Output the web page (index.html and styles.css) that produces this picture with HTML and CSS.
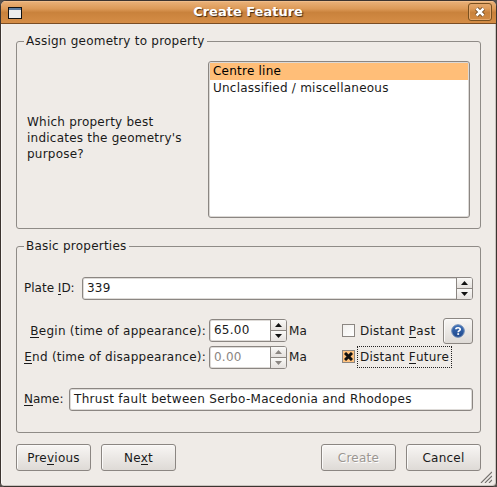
FILE: index.html
```html
<!DOCTYPE html>
<html lang="en">
<head>
<meta charset="utf-8">
<title>Create Feature</title>
<link rel="stylesheet" href="styles.css">
</head>
<body>
<main class="window">
  <header class="titlebar">
    <svg class="app-icon" width="14" height="12" viewBox="0 0 14 12" shape-rendering="crispEdges"><rect width="14" height="12" fill="#111"/><rect x="1" y="1" width="12" height="2" fill="#5b7ba0"/><rect x="1" y="3" width="12" height="8" fill="#ececec"/></svg>
    <h1 class="title">Create Feature</h1>
    <button class="close" aria-label="Close"><svg width="10" height="10" viewBox="0 0 10 10"><path d="M1.5 1.5l7 7M8.5 1.5l-7 7" stroke="#68421c" stroke-width="4.2"/><path d="M1.5 1.5l7 7M8.5 1.5l-7 7" stroke="#fff" stroke-width="2.5"/></svg></button>
  </header>
  <section class="content">
    <section class="group geometry">
      <h2 class="legend">Assign geometry to property</h2>
      <p class="question">Which property best<br>indicates the geometry's<br>purpose?</p>
      <ul class="list">
        <li class="selected">Centre line</li>
        <li>Unclassified / miscellaneous</li>
      </ul>
    </section>
    <section class="group basics">
      <h2 class="legend">Basic properties</h2>
      <div class="row plate">
        <label class="plate-label">Plate <u>I</u>D:</label>
        <div class="field spin"><span class="value">339</span><span class="steps"><i><svg width="7" height="4"><path d="M0 4L3.5 0L7 4z"/></svg></i><i><svg width="7" height="4"><path d="M0 0L3.5 4L7 0z"/></svg></i></span></div>
      </div>
      <div class="row begin">
        <label class="time-label"><u>B</u>egin (time of appearance):</label>
        <div class="field spin time"><span class="value">65.00</span><span class="steps"><i><svg width="7" height="4"><path d="M0 4L3.5 0L7 4z"/></svg></i><i><svg width="7" height="4"><path d="M0 0L3.5 4L7 0z"/></svg></i></span></div>
        <span class="unit">Ma</span>
        <span class="check"></span>
        <label class="check-label past">Distant <u>P</u>ast</label>
        <button class="help" aria-label="Help"><svg width="14" height="14" viewBox="0 0 14 14"><defs><linearGradient id="blue" x2="0" y2="1"><stop stop-color="#3f71b8"/><stop offset="1" stop-color="#1e478c"/></linearGradient></defs><circle cx="7" cy="7" r="6.3" fill="url(#blue)" stroke="#6f8db8"/><path d="M4.9 5.3C5 3.2 9.2 3.2 9.2 5.4C9.2 6.7 7.2 6.7 7.2 8.3" fill="none" stroke="#fff" stroke-width="1.7"/><rect x="6.3" y="9.2" width="1.8" height="1.7" fill="#fff"/></svg></button>
      </div>
      <div class="row end">
        <label class="time-label"><u>E</u>nd (time of disappearance):</label>
        <div class="field spin time off"><span class="value">0.00</span><span class="steps"><i><svg width="7" height="4"><path d="M0 4L3.5 0L7 4z"/></svg></i><i><svg width="7" height="4"><path d="M0 0L3.5 4L7 0z"/></svg></i></span></div>
        <span class="unit">Ma</span>
        <span class="check on"><svg width="9" height="9" viewBox="0 0 9 9"><path d="M1 1l7 7M8 1l-7 7" stroke="#111" stroke-width="3"/></svg></span>
        <label class="check-label focus">Distant <u>F</u>uture</label>
      </div>
      <div class="row name">
        <label class="name-label"><u>N</u>ame:</label>
        <div class="field"><span class="value long">Thrust fault between Serbo-Macedonia and Rhodopes</span></div>
      </div>
    </section>
    <footer class="buttons">
      <button class="btn">Pre<u>v</u>ious</button>
      <button class="btn">Ne<u>x</u>t</button>
      <button class="btn create" disabled>Create</button>
      <button class="btn">Cancel</button>
    </footer>
  </section>
  <svg class="grip" width="13" height="12" viewBox="0 0 13 12"><path d="M2 12L13 1M6 12L13 5M10 12L13 9" stroke="#fff"/><path d="M1 12L12 1M5 12L12 5M9 12L12 9" stroke="#77736f" stroke-width="1.2"/></svg>
</main>
</body>
</html>
```
FILE: styles.css
```css
* { box-sizing: border-box; }
body { margin: 0; width: 497px; height: 487px; overflow: hidden; background: #55504c; font: 12px/16px "DejaVu Sans", sans-serif; letter-spacing: 0.23px; color: #1a1a1a; }
.window { position: relative; width: 497px; height: 487px; border: 1px solid #3c3430; border-radius: 6px 6px 4px 4px; background: #efebe7; overflow: hidden; box-shadow: inset 1px 0 #f9f7f5, inset -1px -1px #c9c4bf; }
h1, h2, p, ul { margin: 0; padding: 0; font: inherit; }
u { text-decoration: none; box-shadow: inset 0 -1px #1a1a1a; display: inline-block; height: 15px; line-height: 16px; vertical-align: top; }
button { font: inherit; letter-spacing: inherit; color: inherit; padding: 0; border: 1px solid #8b8682; border-radius: 3px; background: linear-gradient(#f8f6f4, #ebe8e5 50%, #dedad6); box-shadow: inset 1px 1px #fbfaf9; }
.titlebar { display: flex; align-items: center; height: 23px; padding: 0 4px 0 7px; background: linear-gradient(#eab27a, #dd9a58 35%, #c9823c 52%, #d58d46); border-bottom: 1px solid #7a4d24; box-shadow: inset 0 1px #f0bd8a; }
.app-icon { margin-top: 2px; }
.title { flex: 1; text-align: center; font: bold 13px/20px "DejaVu Sans", sans-serif; letter-spacing: 0; color: #fff; text-shadow: 1px 1px 1px #3d2510; padding-left: 6px; }
.close { display: flex; align-items: center; justify-content: center; width: 24px; height: 18px; border-color: #79501f; background: none; box-shadow: inset 0 0 0 1px #e3a66b; }
.content { padding: 17px 15px 0; }
.group { position: relative; width: 465px; border: 1px solid #8f8b87; border-radius: 3px; }
.legend { position: absolute; left: 7px; top: -9px; padding: 0 2px; background: #efebe7; white-space: nowrap; }
.geometry { display: flex; height: 188px; padding: 19px 10px 10px; }
.question { width: 181px; padding-top: 53px; }
.list { width: 262px; height: 157px; padding: 1px; border: 1px solid #8b8682; border-radius: 3px; background: #fff; box-shadow: inset 0 0 0 1px #dcd9d6; list-style: none; }
.list li { height: 17px; padding-left: 3px; line-height: 17px; }
.list .selected { background: #ffbe78; color: #000; }
.basics { height: 187px; margin-top: 17px; padding: 30px 7px 0; }
.row { display: flex; align-items: center; height: 23px; white-space: nowrap; }
.field { flex: 1; display: flex; height: 23px; border: 1px solid #8b8682; border-radius: 3px; background: #fff; box-shadow: inset 0 0 0 1px #dedbd8; overflow: hidden; }
.value { flex: 1; padding-left: 4px; line-height: 20px; }
.long { letter-spacing: 0.3px; }
.steps { width: 16px; border-left: 1px solid #8b8682; background: #f1eeeb; }
.steps i { display: flex; align-items: center; justify-content: center; height: 10px; background: linear-gradient(#faf9f7, #e5e1de); }
.steps i + i { height: 11px; border-top: 1px solid #8b8682; }
.steps svg { fill: #111; }
.plate-label { width: 58px; margin-bottom: 2px; letter-spacing: 0; }
.begin { margin-top: 19px; }
.time-label { width: 185px; padding-right: 3px; text-align: right; letter-spacing: 0.25px; }
.time { flex: none; width: 78px; }
.unit { width: 55px; padding-left: 2px; }
.check { display: flex; align-items: center; justify-content: center; width: 13px; height: 13px; border: 1px solid #8b8682; background: linear-gradient(135deg, #f1efed, #fff); }
.on { background: #ffc27f; }
.check-label { width: 95px; height: 22px; margin-left: 2px; padding-left: 3px; line-height: 22px; }
.past { width: 86px; }
.check-label u { margin-top: 3px; }
.focus { border: 1px dotted #222; padding-left: 2px; line-height: 20px; }
.focus u { margin-top: 2px; }
.help { display: flex; align-items: center; justify-content: center; width: 30px; height: 26px; }
.end { margin-top: 4px; }
.end .time-label, .end .unit, .end .check { margin-bottom: 2px; }
.end .focus { margin-bottom: 1px; }
.off .value { color: #8b8682; }
.off svg { fill: #8b8682; }
.name { margin-top: 19px; }
.name-label { width: 45px; margin-bottom: 2px; letter-spacing: 0; }
.buttons { display: flex; gap: 10px; margin-top: 11px; }
.btn { width: 75px; height: 27px; line-height: 24px; }
.btn u { margin-top: 4px; }
.create { margin-left: 135px; color: #9b9691; text-shadow: 1px 1px #fff; }
.grip { position: absolute; right: 3px; bottom: 3px; }
```
